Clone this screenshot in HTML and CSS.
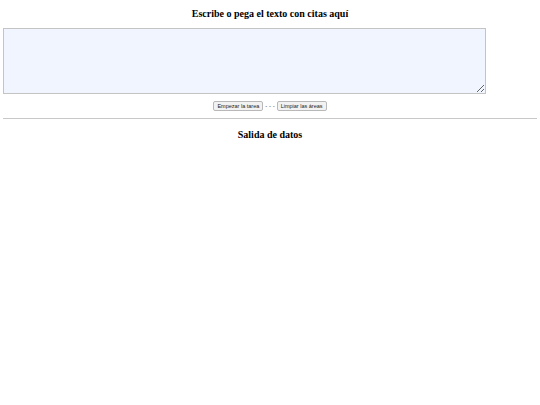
FILE: index.html
```html
<!DOCTYPE html>
<html lang="es">
<head>
<meta charset="utf-8">
<title>Citas</title>
<link rel="stylesheet" href="styles.css">
</head>
<body>
<h3 class="title">Escribe o pega el texto con citas aquí</h3>
<textarea class="input"></textarea>
<div class="actions">
  <button class="btn">Empezar la tarea</button>
  <span class="sep">- - -</span>
  <button class="btn">Limpiar las áreas</button>
</div>
<hr class="rule">
<h3 class="title">Salida de datos</h3>
</body>
</html>
```
FILE: styles.css
```css
html, body {
  margin: 0;
  padding: 0;
  background: #ffffff;
}
body {
  padding: 0 3px;
  font-family: "Liberation Serif", "Times New Roman", serif;
  color: #000;
}
.title {
  font-size: 10px;
  line-height: 12px;
  font-weight: bold;
  text-align: center;
  margin: 8px 0 8px;
}
.input {
  display: block;
  box-sizing: border-box;
  width: 483px;
  height: 66px;
  margin: 0;
  padding: 2px;
  border: 1px solid #c4c4c4;
  background: #f0f5ff;
  resize: vertical;
}
.actions {
  display: flex;
  justify-content: center;
  align-items: center;
  gap: 2px;
  margin-top: 7px;
  height: 10px;
  font-family: "Liberation Sans", Arial, sans-serif;
  font-size: 5px;
}
.btn {
  box-sizing: border-box;
  height: 10px;
  padding: 0 3px;
  font-family: "Liberation Sans", Arial, sans-serif;
  font-size: 5.5px;
  line-height: 8px;
  color: #222;
  background: #f2f2f2;
  border: 1px solid #b8b8b8;
  border-radius: 2px;
}
.sep {
  font-size: 6px;
  color: #333;
}
.rule {
  margin: 7px 0 0;
  border: 0;
  border-top: 1px solid #c8c8c8;
  height: 0;
}
.rule + .title {
  margin-top: 10px;
}
```
